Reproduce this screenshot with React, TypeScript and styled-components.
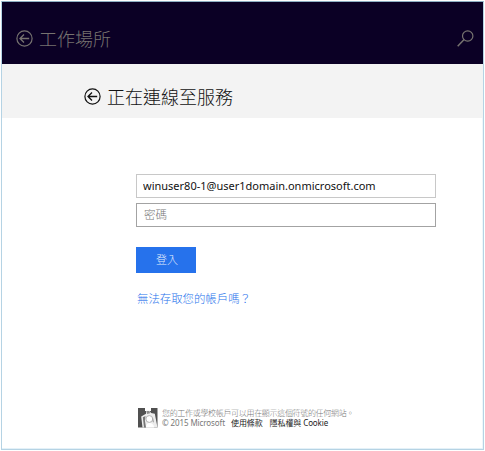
import React from "react";
import styled, { createGlobalStyle } from "styled-components";

const Global = createGlobalStyle`
  * { box-sizing: border-box; }
  body {
    margin: 0;
    background: #fff;
    font-family: "Noto Sans", "Noto Sans CJK TC", sans-serif;
  }
`;

const Frame = styled.div`
  width: 485px;
  height: 451px;
  padding: 1px;
`;

const Window = styled.main`
  width: 483px;
  height: 449px;
  border: 1px solid #b5d3e4;
  border-top-color: #8fb0c4;
  box-shadow: inset 0 -1px #e4f1f8, inset -1px 0 #eef6fa;
  display: flex;
  flex-direction: column;
`;

const TopBar = styled.header`
  height: 62px;
  flex: none;
  padding: 10px 9px 0 14px;
  background: #0b0025;
  color: #777370;
  display: flex;
  align-items: center;
  justify-content: space-between;
`;

const SubBar = styled.div`
  height: 54px;
  flex: none;
  padding: 10px 0 0 82px;
  background: #f3f3f3;
  color: #111;
  display: flex;
  align-items: center;
`;

const Heading = styled.div`
  display: flex;
  align-items: center;
  gap: 6px;
  svg { display: block; }
`;

const Title = styled.h1`
  margin: -1px 0 0;
  font: 300 18px/24px "Noto Sans CJK TC", sans-serif;
`;

const Form = styled.form`
  width: 300px;
  margin: 56px 0 0 134px;
  display: flex;
  flex-direction: column;
  align-items: flex-start;
`;

const Field = styled.input<{ $tone: string }>`
  width: 300px;
  height: 24px;
  margin: 0 0 5px;
  padding: 0 6px 2px;
  border: 1px solid ${(p) => p.$tone};
  border-radius: 0;
  outline: 0;
  background: #fff;
  color: #111;
  font: 400 11px "Noto Sans", "Noto Sans CJK TC", sans-serif;
  &::placeholder {
    color: #777;
    opacity: 1;
    font: 300 11.5px "Noto Sans CJK TC", sans-serif;
    text-indent: 1px;
  }
`;

const Submit = styled.button`
  width: 60px;
  height: 26px;
  margin: 15px 0 0;
  padding: 0 0 2px 2px;
  border: 0;
  background: #2672ec;
  color: #e4edfc;
  font: 300 11px "Noto Sans CJK TC", sans-serif;
`;

const HelpLink = styled.a`
  margin: 17px 0 0 1px;
  color: #2672ec;
  font: 300 11.4px/17px "Noto Sans CJK TC", sans-serif;
  white-space: nowrap;
`;

const Footer = styled.footer`
  margin: auto 0 21px 136px;
  display: flex;
  gap: 4px;
  align-items: center;
  svg { display: block; flex: none; }
`;

const Legal = styled.div`
  color: #777;
  font: 400 8px/10px "Noto Sans", "Noto Sans CJK TC", sans-serif;
  white-space: nowrap;
`;

const LegalLine = styled.div<{ $compact?: boolean }>`
  display: flex;
  font-weight: ${(p) => (p.$compact ? 300 : 400)};
  letter-spacing: ${(p) => (p.$compact ? "-0.32px" : "-0.1px")};
`;

const LegalLink = styled.a<{ $gap: number }>`
  margin-left: ${(p) => p.$gap}px;
  color: #222;
`;

const BackIcon = () => (
  <svg width="17" height="17" viewBox="0 0 17 17" fill="none" stroke="currentColor" strokeWidth="1.2">
    <circle cx="8.5" cy="8.5" r="7.6" />
    <path d="M13.2 8.5H4.2M8 4.5 4 8.5 8 12.5" strokeWidth="1.3" />
  </svg>
);

const SearchIcon = () => (
  <svg width="17" height="18" viewBox="0 0 17 18" fill="none" stroke="currentColor" strokeWidth="1.2">
    <circle cx="10.7" cy="7" r="5.2" />
    <path d="M7.1 10.6.7 17.2" strokeWidth="1.5" />
  </svg>
);

const BadgeIcon = () => (
  <svg width="20" height="20" viewBox="0 0 20 20">
    <path fill="#505050" d="M0 0h19.5v19.5H0z" />
    <path fill="#fff" d="M7 0h6v3H7z" />
    <path fill="#ededed" d="M3.2 8.5 8 5.8 8.5 2.5h3L13 5l3.8.7 2.7 13.8H4.5z" />
    <path fill="#8b8b8b" d="M9 3h2.5l.5 2.2-3 .7z" />
    <circle cx="11.3" cy="11" r="3.4" fill="#fff" stroke="#aaa" strokeWidth=".9" />
    <path fill="#777" d="M4.8 9.2 7.5 8l-.6 4.4L8 19.5H6z" />
    <path fill="#999" d="m14.8 8.5 1.2 6.3-1.4-1.3z" />
    <path fill="#fff" d="M8 19.5c0-3 1.4-4.5 3.7-4.5s4 1.6 4.5 4.5z" />
  </svg>
);

export default function App() {
  return (
    <Frame>
      <Global />
      <Window>
        <TopBar>
          <Heading>
            <BackIcon />
            <Title>工作場所</Title>
          </Heading>
          <SearchIcon />
        </TopBar>
        <SubBar>
          <Heading>
            <BackIcon />
            <Title>正在連線至服務</Title>
          </Heading>
        </SubBar>
        <Form onSubmit={(e) => e.preventDefault()}>
          <Field $tone="#c8c8c8" defaultValue="winuser80-1@user1domain.onmicrosoft.com" />
          <Field $tone="#a3a3a3" type="password" placeholder="密碼" />
          <Submit>登入</Submit>
          <HelpLink>無法存取您的帳戶嗎？</HelpLink>
        </Form>
        <Footer>
          <BadgeIcon />
          <Legal>
            <LegalLine $compact>您的工作或學校帳戶可以用在顯示這個符號的任何網站。</LegalLine>
            <LegalLine>
              © 2015 Microsoft
              <LegalLink $gap={6}>使用條款</LegalLink>
              <LegalLink $gap={7}>隱私權與 Cookie</LegalLink>
            </LegalLine>
          </Legal>
        </Footer>
      </Window>
    </Frame>
  );
}
